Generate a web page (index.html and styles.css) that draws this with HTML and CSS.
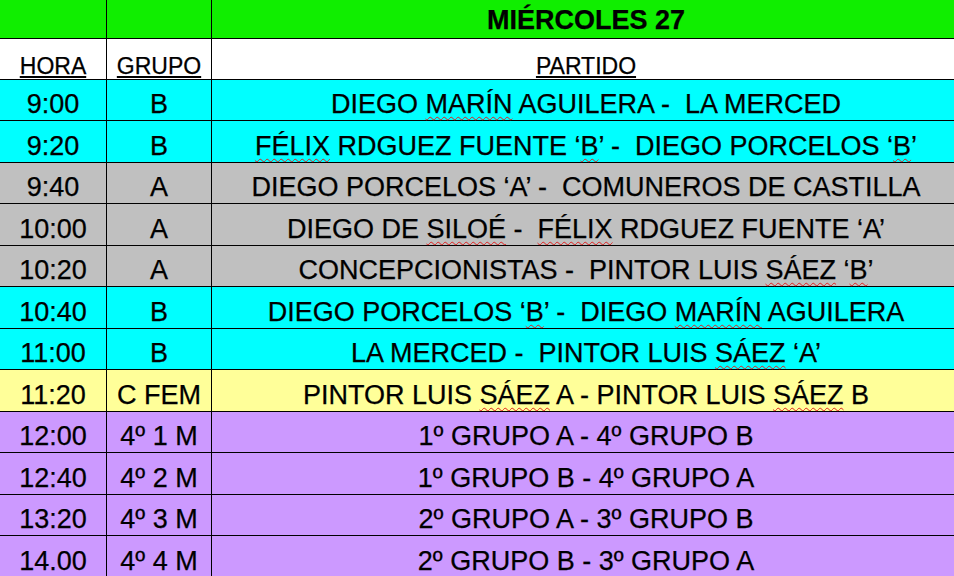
FILE: index.html
```html
<!DOCTYPE html>
<html lang="es">
<head>
<meta charset="utf-8">
<title>Miércoles 27</title>
<link rel="stylesheet" href="styles.css">
</head>
<body>
<table class="sched">
  <colgroup><col class="c-hora"><col class="c-grupo"><col class="c-partido"></colgroup>
  <tr class="r-title"><td></td><td></td><td class="title">MIÉRCOLES 27</td></tr>
  <tr class="r-head"><td><u>HORA</u></td><td><u>GRUPO</u></td><td><u>PARTIDO</u></td></tr>
  <tr class="cyan"><td>9:00</td><td>B</td><td>DIEGO <span class="sp">MARÍN</span> AGUILERA -&nbsp; LA MERCED</td></tr>
  <tr class="cyan"><td>9:20</td><td>B</td><td><span class="sp">FÉLIX</span> RDGUEZ FUENTE ‘<span class="sp">B</span>’ -&nbsp; DIEGO PORCELOS ‘<span class="sp">B</span>’</td></tr>
  <tr class="grey"><td>9:40</td><td>A</td><td>DIEGO PORCELOS ‘A’ -&nbsp; COMUNEROS DE CASTILLA</td></tr>
  <tr class="grey"><td>10:00</td><td>A</td><td>DIEGO DE <span class="sp">SILOÉ</span> -&nbsp; <span class="sp">FÉLIX</span> RDGUEZ FUENTE ‘A’</td></tr>
  <tr class="grey"><td>10:20</td><td>A</td><td>CONCEPCIONISTAS -&nbsp; PINTOR LUIS <span class="sp">SÁEZ</span> ‘<span class="sp">B</span>’</td></tr>
  <tr class="cyan"><td>10:40</td><td>B</td><td>DIEGO PORCELOS ‘<span class="sp">B</span>’ -&nbsp; DIEGO <span class="sp">MARÍN</span> AGUILERA</td></tr>
  <tr class="cyan"><td>11:00</td><td>B</td><td>LA MERCED -&nbsp; PINTOR LUIS <span class="sp">SÁEZ</span> ‘A’</td></tr>
  <tr class="yellow"><td>11:20</td><td>C FEM</td><td>PINTOR LUIS <span class="sp">SÁEZ</span> A - PINTOR LUIS <span class="sp">SÁEZ</span> B</td></tr>
  <tr class="purple"><td>12:00</td><td>4º 1 M</td><td>1º GRUPO A - 4º GRUPO B</td></tr>
  <tr class="purple"><td>12:40</td><td>4º 2 M</td><td>1º GRUPO B - 4º GRUPO A</td></tr>
  <tr class="purple"><td>13:20</td><td>4º 3 M</td><td>2º GRUPO A - 3º GRUPO B</td></tr>
  <tr class="purple"><td>14.00</td><td>4º 4 M</td><td>2º GRUPO B - 3º GRUPO A</td></tr>
</table>
</body>
</html>
```

FILE: styles.css
```css
html, body {
  margin: 0;
  padding: 0;
  background: #ffffff;
  overflow: hidden;
}
body {
  width: 954px;
  height: 576px;
  font-family: "Liberation Sans", Arial, sans-serif;
  color: #000;
}
.sched {
  border-collapse: collapse;
  table-layout: fixed;
  width: 961px;
  margin: 0 0 0 -1px;
}
.c-hora { width: 107px; }
.c-grupo { width: 105px; }
.c-partido { width: 749px; }

.sched td {
  border: 1px solid #000;
  text-align: center;
  vertical-align: bottom;
  padding: 0 0 1px 0;
  font-size: 27px;
  line-height: 30px;
  white-space: nowrap;
  -webkit-text-stroke: 0.25px #000;
}
.sched tr { height: 41.5px; }

.r-title { height: 38px !important; background: #10ee00; }
.r-title td { border-top: none; padding-bottom: 3px; }
.title {
  font-weight: bold;
  font-size: 28px;
  line-height: 28px;
}
.r-head { height: 41px !important; background: #fff; }
.r-head td {
  font-size: 23px;
  line-height: 22px;
  padding-bottom: 2px;
}
.r-head u {
  text-decoration-thickness: 2px;
  text-underline-offset: 2px;
}

.cyan { background: #00ffff; }
.grey { background: #c0c0c0; }
.yellow { background: #ffff99; }
.purple { background: #cc99ff; }

.sp {
  text-decoration: underline wavy #e02020;
  text-decoration-thickness: 1px;
  text-underline-offset: 3px;
}
```
